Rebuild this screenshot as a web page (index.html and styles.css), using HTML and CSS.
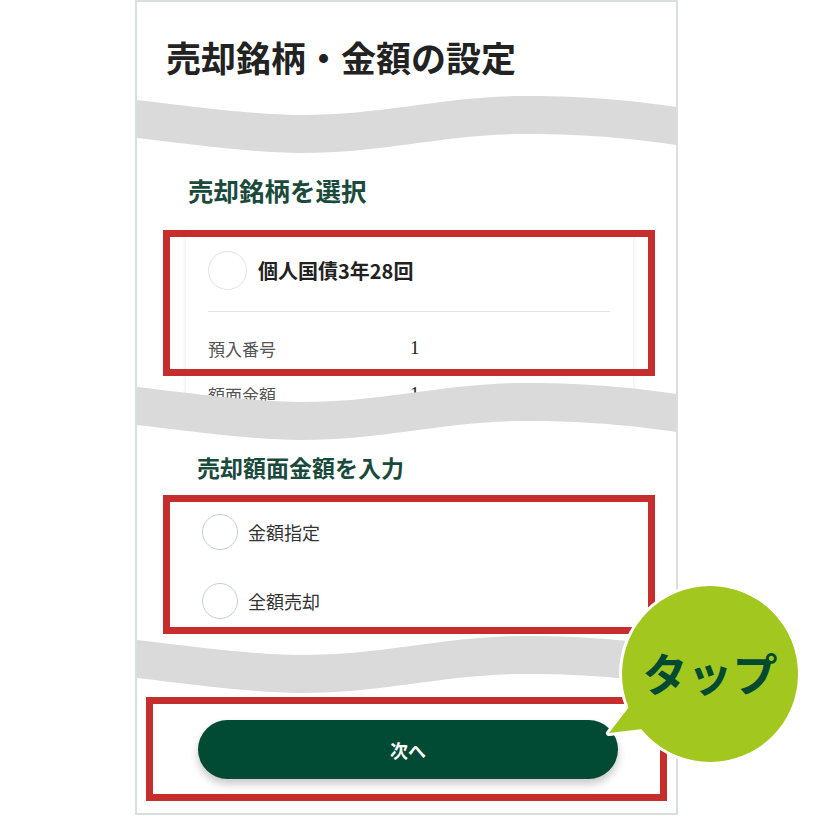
FILE: index.html
```html
<!DOCTYPE html>
<html lang="ja">
<head>
<meta charset="utf-8">
<title>売却銘柄・金額の設定</title>
<link rel="stylesheet" href="styles.css">
</head>
<body>
<div class="page">
  <div class="phone">
    <h1 class="title">売却銘柄・金額の設定</h1>
    <svg class="wave" viewBox="0 0 543 60" preserveAspectRatio="none" aria-hidden="true"><path d="M0,6 C60,13 120,21 165,21 C250,21 310,2 392,2 C460,2 510,8 543,13 L543,51 C510,46 460,40 392,40 C310,40 250,59 165,59 C120,59 60,51 0,44 Z"/></svg>
    <h2 class="heading heading-1">売却銘柄を選択</h2>
    <div class="card-wrap">
      <div class="card">
        <div class="card-head">
          <span class="radio radio-card"></span>
          <span class="card-name">個人国債3年28回</span>
        </div>
        <div class="divider"></div>
        <dl class="rows">
          <div class="row"><dt>預入番号</dt><dd>1</dd></div>
          <div class="row"><dt>額面金額</dt><dd>1</dd></div>
        </dl>
      </div>
      <div class="mark mark-1"></div>
    </div>
    <svg class="wave wave-2" viewBox="0 0 543 60" preserveAspectRatio="none" aria-hidden="true"><path d="M0,6 C60,13 120,21 165,21 C250,21 310,2 392,2 C460,2 510,8 543,13 L543,51 C510,46 460,40 392,40 C310,40 250,59 165,59 C120,59 60,51 0,44 Z"/></svg>
    <h2 class="heading heading-2">売却額面金額を入力</h2>
    <div class="options">
      <label class="option"><span class="radio"></span><span>金額指定</span></label>
      <label class="option"><span class="radio"></span><span>全額売却</span></label>
      <div class="mark mark-2"></div>
    </div>
    <svg class="wave" viewBox="0 0 543 60" preserveAspectRatio="none" aria-hidden="true"><path d="M0,6 C60,13 120,21 165,21 C250,21 310,2 392,2 C460,2 510,8 543,13 L543,51 C510,46 460,40 392,40 C310,40 250,59 165,59 C120,59 60,51 0,44 Z"/></svg>
    <div class="next">
      <button class="btn" type="button">次へ</button>
      <div class="mark mark-3"></div>
    </div>
  </div>
  <div class="bubble">
    <svg width="206" height="190" viewBox="0 0 206 190">
      <g fill="#ffffff" stroke="#ffffff" stroke-width="6" stroke-linejoin="round">
        <circle cx="110" cy="94" r="88"/>
        <polygon points="32,123 9,153 43,149"/>
      </g>
      <g fill="#a2c81f">
        <circle cx="110" cy="94" r="88"/>
        <polygon points="32,123 9,153 43,149"/>
      </g>
      <text class="bubble-text" x="110" y="112" text-anchor="middle">タップ</text>
    </svg>
  </div>
</div>
</body>
</html>
```

FILE: styles.css
```css
* { box-sizing: border-box; }

html, body {
  margin: 0;
  padding: 0;
  background: #ffffff;
}

body {
  font-family: "Noto Sans CJK JP", "Noto Sans", sans-serif;
  color: #222222;
}

.page {
  position: relative;
  width: 816px;
  height: 816px;
}

.phone {
  width: 543px;
  height: 815px;
  margin-left: 135px;
  border: 2px solid #d8dfde;
  background: #ffffff;
}

.title {
  margin: 0;
  padding: 35px 0 0 29px;
  font-size: 35px;
  line-height: 40px;
  font-weight: 700;
  color: #222222;
}

.wave {
  display: block;
  width: 539px;
  height: 60px;
  margin-top: 17px;
  fill: #dadada;
  position: relative;
  z-index: 1;
}

.wave-2 {
  margin-top: -29px;
}

.heading {
  margin: 0;
  font-weight: 700;
  color: #1a4a3c;
}

.heading-1 {
  margin-top: 21px;
  padding-left: 51px;
  font-size: 25.5px;
  line-height: 30px;
}

.heading-2 {
  margin-top: 12px;
  padding-left: 60px;
  font-size: 23px;
  line-height: 28px;
}

.card-wrap {
  position: relative;
  height: 181px;
  margin-top: 24px;
  overflow: hidden;
}

.card {
  width: 447px;
  margin-left: 49px;
  padding: 22px 23px 0 22px;
  background: #ffffff;
  box-shadow: 0 0 4px rgba(0, 0, 0, 0.10);
  height: 200px;
}

.card-head {
  display: flex;
  align-items: center;
  gap: 11px;
  height: 39px;
}

.radio {
  display: block;
  flex: none;
  width: 36px;
  height: 36px;
  border-radius: 50%;
  border: 1.5px solid #c3d1ce;
  background: #ffffff;
}

.radio-card {
  width: 39px;
  height: 39px;
  border-color: #e3e3e3;
}

.card-name {
  font-size: 20px;
  font-weight: 700;
  color: #222222;
}

.divider {
  height: 1px;
  margin-top: 21px;
  background: #e2e7e6;
}

.rows {
  margin: 24px 0 0 0;
  display: flex;
  flex-direction: column;
  gap: 22px;
}

.row {
  display: flex;
  height: 24px;
  align-items: center;
}

.row dt {
  width: 202px;
  font-size: 17px;
  color: #555555;
}

.row dd {
  margin: 0;
  font-family: "Liberation Serif", "Noto Sans CJK JP", serif;
  font-size: 19px;
  color: #222222;
}

.mark {
  position: absolute;
  border: 7px solid #c62e2e;
  pointer-events: none;
}

.mark-1 {
  left: 26px;
  top: 1px;
  width: 492px;
  height: 146px;
}

.options {
  position: relative;
  margin-top: 14px;
  padding: 19px 0 15px 65px;
  display: flex;
  flex-direction: column;
  gap: 33px;
}

.option {
  display: flex;
  align-items: center;
  gap: 10px;
  height: 36px;
  font-size: 18px;
  color: #333333;
}

.mark-2 {
  left: 26px;
  top: 0;
  width: 492px;
  height: 139px;
}

.options + .wave {
  margin-top: 0;
}

.next {
  position: relative;
  margin-top: 3px;
  padding: 23px 0 22px 61px;
}

.btn {
  display: block;
  width: 420px;
  height: 59px;
  border: none;
  border-radius: 30px;
  background: #014a33;
  color: #ffffff;
  font-family: "Noto Sans CJK JP", "Noto Sans", sans-serif;
  font-size: 18px;
  font-weight: 700;
  box-shadow: 0 5px 8px rgba(0, 0, 0, 0.22);
}

.mark-3 {
  left: 9px;
  top: 0;
  width: 521px;
  height: 104px;
}

.bubble {
  position: absolute;
  z-index: 5;
  left: 600px;
  top: 580px;
  width: 206px;
  height: 190px;
}

.bubble svg {
  display: block;
}

.bubble-text {
  font-family: "Noto Sans CJK JP", sans-serif;
  font-size: 45px;
  font-weight: 700;
  fill: #004a32;
}
```
